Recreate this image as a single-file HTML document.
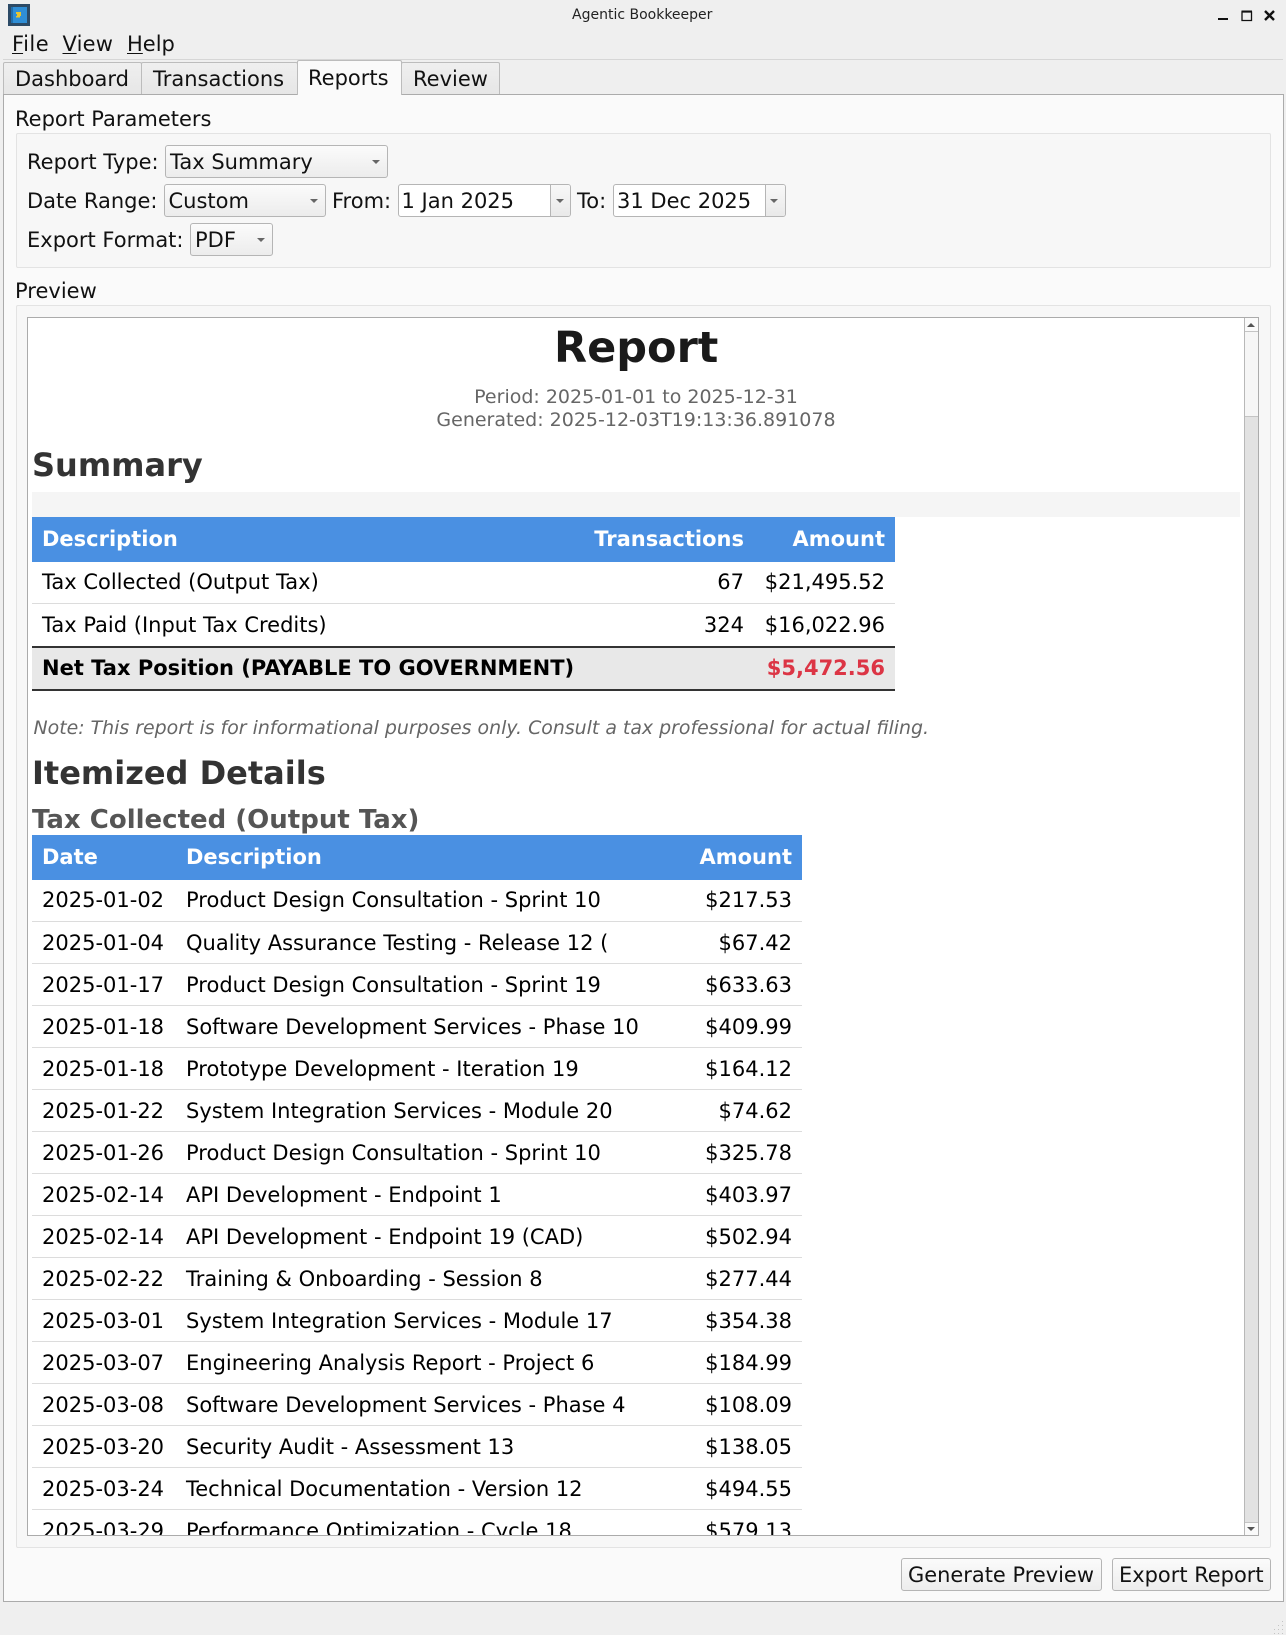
<!DOCTYPE html>
<html><head><meta charset="utf-8"><style>
html,body{margin:0;padding:0}
body{width:1286px;height:1635px;position:relative;overflow:hidden;background:#efefef;font-family:"DejaVu Sans",sans-serif;color:#000}
.b{position:absolute;box-sizing:border-box}
.t{position:absolute;line-height:0;top:calc(var(--b)*1px - .346em);white-space:pre;font-size:21px;color:#111}
.d{font-size:21px;color:#000}
.h{font-size:21px;font-weight:bold;color:#fff}
.r{text-align:right}
.combo{background:linear-gradient(#fbfbfb,#ececec);border:1px solid #b5b5b5;border-radius:3px}
.edit{background:#fff;border:1px solid #b5b5b5;border-radius:3px}
.tab{background:linear-gradient(#efefef,#e6e6e6);border:1px solid #bcbcbc;border-bottom:0;border-radius:2px 2px 0 0}
.btn{background:linear-gradient(#fbfbfb,#ededed);border:1px solid #b5b5b5;border-radius:3px}
.a{position:absolute;width:0;height:0;border-left:4px solid transparent;border-right:4px solid transparent;border-top:4px solid #666}
.sep{position:absolute;height:1px;background:#dcdcdc}
u{text-decoration-thickness:1px;text-underline-offset:2px}
</style></head><body>

<svg class="b" style="left:8px;top:4px" width="22" height="22" viewBox="0 0 22 22"><rect width="22" height="22" fill="#2c4a66"/><rect x="3" y="3" width="16" height="16" fill="#2f8ed6"/><rect x="3" y="3" width="2" height="16" fill="#1f6fae"/><rect x="8" y="8" width="5" height="2" fill="#e8c52e"/><rect x="9" y="10" width="4" height="2" fill="#e8c52e"/><rect x="8" y="12" width="4" height="1.5" fill="#e8c52e"/></svg>
<div class="t" style="--b:20;left:572px;font-size:14px;color:#222">Agentic Bookkeeper</div>
<svg class="b" style="left:1214px;top:6px" width="66" height="18" viewBox="0 0 66 18"><path d="M4 13h10" stroke="#111" stroke-width="2" fill="none"/><path d="M28 6h9.5v8.5h-9.5z" stroke="#111" stroke-width="1.3" fill="none"/><path d="M27.5 5.5h10.5" stroke="#111" stroke-width="2"/><path d="M51 5l9 9M60 5l-9 9" stroke="#111" stroke-width="2.4" fill="none"/></svg>

<div class="t" style="--b:51;left:12px;letter-spacing:.5px"><u>F</u>ile</div>
<div class="t" style="--b:51;left:62.5px;letter-spacing:.2px"><u>V</u>iew</div>
<div class="t" style="--b:51;left:127px"><u>H</u>elp</div>
<div class="sep" style="left:3px;top:59px;width:1280px;background:#d6d6d6"></div>

<div class="b tab" style="left:3px;top:62px;width:139px;height:33px"></div>
<div class="b tab" style="left:141px;top:62px;width:157px;height:33px"></div>
<div class="b tab" style="left:401px;top:62px;width:99px;height:33px"></div>
<div class="b" style="left:3px;top:94px;width:1281px;height:1508px;background:#fafafa;border:1px solid #ababab"></div>
<div class="b" style="left:297px;top:60px;width:105px;height:35px;background:#fafafa;border:1px solid #bcbcbc;border-bottom:0;border-radius:2px 2px 0 0"></div>
<div class="t" style="--b:86;left:15px">Dashboard</div>
<div class="t" style="--b:86;left:153px">Transactions</div>
<div class="t" style="--b:85;left:308px">Reports</div>
<div class="t" style="--b:86;left:413px">Review</div>

<div class="t" style="--b:126;left:15px">Report Parameters</div>
<div class="b" style="left:16px;top:133px;width:1255px;height:135px;background:#f7f7f7;border:1px solid #e3e3e3;border-radius:2px"></div>

<div class="t" style="--b:169;left:27px">Report Type:</div>
<div class="b combo" style="left:165px;top:145px;width:223px;height:33px"></div>
<div class="t" style="--b:169;left:170px">Tax Summary</div>
<div class="a" style="left:372px;top:160px"></div>

<div class="t" style="--b:208;left:27px">Date Range:</div>
<div class="b combo" style="left:164px;top:184px;width:162px;height:33px"></div>
<div class="t" style="--b:208;left:168.5px">Custom</div>
<div class="a" style="left:310px;top:199px"></div>
<div class="t" style="--b:208;left:332px">From:</div>
<div class="b edit" style="left:398px;top:184px;width:173px;height:33px"></div>
<div class="b" style="left:550px;top:185px;width:20px;height:31px;background:linear-gradient(#f8f8f8,#e9e9e9);border-left:1px solid #b5b5b5;border-radius:0 2px 2px 0"></div>
<div class="t" style="--b:208;left:401.5px">1 Jan 2025</div>
<div class="a" style="left:556px;top:199px"></div>
<div class="t" style="--b:208;left:577px">To:</div>
<div class="b edit" style="left:613px;top:184px;width:173px;height:33px"></div>
<div class="b" style="left:765px;top:185px;width:20px;height:31px;background:linear-gradient(#f8f8f8,#e9e9e9);border-left:1px solid #b5b5b5;border-radius:0 2px 2px 0"></div>
<div class="t" style="--b:208;left:617px">31 Dec 2025</div>
<div class="a" style="left:770px;top:199px"></div>

<div class="t" style="--b:247;left:27px">Export Format:</div>
<div class="b combo" style="left:190px;top:223px;width:83px;height:33px"></div>
<div class="t" style="--b:247;left:195px">PDF</div>
<div class="a" style="left:257px;top:238px"></div>

<div class="t" style="--b:298;left:15px">Preview</div>
<div class="b" style="left:16px;top:305px;width:1255px;height:1243px;background:#f7f7f7;border:1px solid #e3e3e3;border-radius:2px"></div>

<!-- text browser -->
<div class="b" style="left:27px;top:317px;width:1232px;height:1219px;background:#fff;border:1px solid #ababab"></div>

<div class="b" style="left:0;top:0;width:1286px;height:1635px;clip-path:inset(318px 42px 100px 28px)">
<div class="t" style="--b:363;left:554px;font-size:43px;font-weight:bold;color:#1a1a1a">Report</div>
<div class="t" style="--b:404;left:0;width:1272px;text-align:center;font-size:19px;color:#666">Period: 2025-01-01 to 2025-12-31</div>
<div class="t" style="--b:427;left:0;width:1272px;text-align:center;font-size:19px;color:#666">Generated: 2025-12-03T19:13:36.891078</div>
<div class="t" style="--b:476;left:32px;font-size:32px;font-weight:bold;color:#333">Summary</div>
<div class="b" style="left:32px;top:492px;width:1208px;height:25px;background:#f5f5f5"></div>

<div class="b" style="left:32px;top:517px;width:863px;height:45px;background:#4a90e2"></div>
<div class="t h" style="--b:546;left:42px">Description</div>
<div class="t h r" style="--b:546;right:542px">Transactions</div>
<div class="t h r" style="--b:546;right:401px">Amount</div>
<div class="t d" style="--b:589;left:42px">Tax Collected (Output Tax)</div>
<div class="t d r" style="--b:589;right:542px">67</div>
<div class="t d r" style="--b:589;right:401px">$21,495.52</div>
<div class="sep" style="left:32px;top:603px;width:863px"></div>
<div class="t d" style="--b:632;left:42px">Tax Paid (Input Tax Credits)</div>
<div class="t d r" style="--b:632;right:542px">324</div>
<div class="t d r" style="--b:632;right:401px">$16,022.96</div>
<div class="b" style="left:32px;top:646px;width:863px;height:45px;background:#e8e8e8;border-top:2px solid #333;border-bottom:2px solid #333"></div>
<div class="t d" style="--b:675;left:42px;font-weight:bold">Net Tax Position (PAYABLE TO GOVERNMENT)</div>
<div class="t d r" style="--b:675;right:401px;font-weight:bold;color:#dc3545">$5,472.56</div>

<div class="t" style="--b:735;left:33.5px;font-size:18.92px;font-style:italic;color:#666">Note: This report is for informational purposes only. Consult a tax professional for actual filing.</div>
<div class="t" style="--b:784;left:32px;font-size:32px;font-weight:bold;color:#333">Itemized Details</div>
<div class="t" style="--b:828.5;left:32px;font-size:26px;font-weight:bold;color:#555">Tax Collected (Output Tax)</div>

<div class="b" style="left:32px;top:835px;width:770px;height:45px;background:#4a90e2"></div>
<div class="t h" style="--b:864;left:42px">Date</div>
<div class="t h" style="--b:864;left:186px">Description</div>
<div class="t h r" style="--b:864;right:494px">Amount</div>

<div class="t d" style="--b:907;left:42px">2025-01-02</div><div class="t d" style="--b:907;left:186px">Product Design Consultation - Sprint 10</div><div class="t d r" style="--b:907;right:494px">$217.53</div><div class="sep" style="left:32px;top:921px;width:770px"></div>
<div class="t d" style="--b:950;left:42px">2025-01-04</div><div class="t d" style="--b:950;left:186px">Quality Assurance Testing - Release 12 (</div><div class="t d r" style="--b:950;right:494px">$67.42</div><div class="sep" style="left:32px;top:963px;width:770px"></div>
<div class="t d" style="--b:992;left:42px">2025-01-17</div><div class="t d" style="--b:992;left:186px">Product Design Consultation - Sprint 19</div><div class="t d r" style="--b:992;right:494px">$633.63</div><div class="sep" style="left:32px;top:1005px;width:770px"></div>
<div class="t d" style="--b:1034;left:42px">2025-01-18</div><div class="t d" style="--b:1034;left:186px">Software Development Services - Phase 10</div><div class="t d r" style="--b:1034;right:494px">$409.99</div><div class="sep" style="left:32px;top:1047px;width:770px"></div>
<div class="t d" style="--b:1076;left:42px">2025-01-18</div><div class="t d" style="--b:1076;left:186px">Prototype Development - Iteration 19</div><div class="t d r" style="--b:1076;right:494px">$164.12</div><div class="sep" style="left:32px;top:1089px;width:770px"></div>
<div class="t d" style="--b:1118;left:42px">2025-01-22</div><div class="t d" style="--b:1118;left:186px">System Integration Services - Module 20</div><div class="t d r" style="--b:1118;right:494px">$74.62</div><div class="sep" style="left:32px;top:1131px;width:770px"></div>
<div class="t d" style="--b:1160;left:42px">2025-01-26</div><div class="t d" style="--b:1160;left:186px">Product Design Consultation - Sprint 10</div><div class="t d r" style="--b:1160;right:494px">$325.78</div><div class="sep" style="left:32px;top:1173px;width:770px"></div>
<div class="t d" style="--b:1202;left:42px">2025-02-14</div><div class="t d" style="--b:1202;left:186px">API Development - Endpoint 1</div><div class="t d r" style="--b:1202;right:494px">$403.97</div><div class="sep" style="left:32px;top:1215px;width:770px"></div>
<div class="t d" style="--b:1244;left:42px">2025-02-14</div><div class="t d" style="--b:1244;left:186px">API Development - Endpoint 19 (CAD)</div><div class="t d r" style="--b:1244;right:494px">$502.94</div><div class="sep" style="left:32px;top:1257px;width:770px"></div>
<div class="t d" style="--b:1286;left:42px">2025-02-22</div><div class="t d" style="--b:1286;left:186px">Training &amp; Onboarding - Session 8</div><div class="t d r" style="--b:1286;right:494px">$277.44</div><div class="sep" style="left:32px;top:1299px;width:770px"></div>
<div class="t d" style="--b:1328;left:42px">2025-03-01</div><div class="t d" style="--b:1328;left:186px">System Integration Services - Module 17</div><div class="t d r" style="--b:1328;right:494px">$354.38</div><div class="sep" style="left:32px;top:1341px;width:770px"></div>
<div class="t d" style="--b:1370;left:42px">2025-03-07</div><div class="t d" style="--b:1370;left:186px">Engineering Analysis Report - Project 6</div><div class="t d r" style="--b:1370;right:494px">$184.99</div><div class="sep" style="left:32px;top:1383px;width:770px"></div>
<div class="t d" style="--b:1412;left:42px">2025-03-08</div><div class="t d" style="--b:1412;left:186px">Software Development Services - Phase 4</div><div class="t d r" style="--b:1412;right:494px">$108.09</div><div class="sep" style="left:32px;top:1425px;width:770px"></div>
<div class="t d" style="--b:1454;left:42px">2025-03-20</div><div class="t d" style="--b:1454;left:186px">Security Audit - Assessment 13</div><div class="t d r" style="--b:1454;right:494px">$138.05</div><div class="sep" style="left:32px;top:1467px;width:770px"></div>
<div class="t d" style="--b:1496;left:42px">2025-03-24</div><div class="t d" style="--b:1496;left:186px">Technical Documentation - Version 12</div><div class="t d r" style="--b:1496;right:494px">$494.55</div><div class="sep" style="left:32px;top:1509px;width:770px"></div>
<div class="t d" style="--b:1538;left:42px">2025-03-29</div><div class="t d" style="--b:1538;left:186px">Performance Optimization - Cycle 18</div><div class="t d r" style="--b:1538;right:494px">$579.13</div>
</div>

<!-- scrollbar -->
<div class="b" style="left:1244px;top:318px;width:14px;height:1217px;background:#e2e2e2;border-left:1px solid #b8b8b8"></div>
<div class="b" style="left:1245px;top:318px;width:13px;height:99px;background:#f6f6f6;border-bottom:1px solid #c4c4c4"></div>
<div class="b" style="left:1245px;top:318px;width:13px;height:14px;background:#fafafa;border-bottom:1px solid #c4c4c4"></div>
<div class="a" style="left:1247px;top:323px;border-top:0;border-bottom:4px solid #555"></div>
<div class="b" style="left:1245px;top:1522px;width:13px;height:13px;background:#fafafa;border-top:1px solid #c4c4c4"></div>
<div class="a" style="left:1247px;top:1527px;border-top-color:#555"></div>

<div class="b btn" style="left:901px;top:1558px;width:201px;height:33px"></div>
<div class="t" style="--b:1582;left:908px;font-size:20.95px">Generate Preview</div>
<div class="b btn" style="left:1112px;top:1558px;width:159px;height:33px"></div>
<div class="t" style="--b:1582;left:1119px;font-size:20.95px">Export Report</div>

<svg class="b" style="left:1272px;top:1620px" width="14" height="15"><g fill="#c4c4c4"><rect x="10" y="1" width="1" height="1"/><rect x="10" y="5" width="1" height="1"/><rect x="6" y="5" width="1" height="1"/><rect x="10" y="9" width="1" height="1"/><rect x="6" y="9" width="1" height="1"/><rect x="2" y="9" width="1" height="1"/><rect x="10" y="13" width="1" height="1"/><rect x="6" y="13" width="1" height="1"/><rect x="2" y="13" width="1" height="1"/></g></svg>
</body></html>
